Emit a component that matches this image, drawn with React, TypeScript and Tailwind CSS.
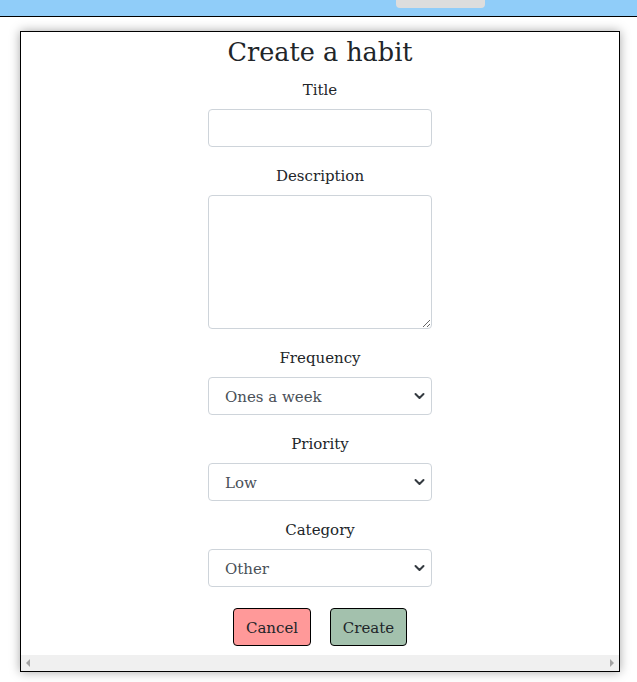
import { useState } from "react";

const serif = { fontFamily: '"DejaVu Serif", "Liberation Serif", serif' };

function Chevron() {
  return (
    <svg
      className="pointer-events-none absolute right-[7px] top-1/2 -translate-y-1/2"
      width="11"
      height="8"
      viewBox="0 0 16 12"
      fill="none"
      stroke="#343a40"
      strokeWidth="3"
      strokeLinecap="round"
      strokeLinejoin="round"
    >
      <path d="m2 3 6 6 6-6" />
    </svg>
  );
}

function Field({ label, children }: { label: string; children: React.ReactNode }) {
  return (
    <div className="flex flex-col items-center mb-4">
      <label className="text-[15px] leading-6 pt-[1px] h-6 text-[#212529] mb-2">{label}</label>
      {children}
    </div>
  );
}

function Select({ value, options, onChange }: { value: string; options: string[]; onChange: (v: string) => void }) {
  return (
    <div className="relative w-[224px]">
      <select
        value={value}
        onChange={(e) => onChange(e.target.value)}
        style={serif}
        className="appearance-none w-full h-[38px] rounded border border-[#ced4da] bg-white pl-4 pr-8 pt-[3px] text-[15px] text-[#495057] outline-none"
      >
        {options.map((o) => (
          <option key={o}>{o}</option>
        ))}
      </select>
      <Chevron />
    </div>
  );
}

export default function App() {
  const [frequency, setFrequency] = useState("Ones a week");
  const [priority, setPriority] = useState("Low");
  const [category, setCategory] = useState("Other");

  return (
    <div className="min-h-[682px] bg-white" style={serif}>
      {/* top bar */}
      <div className="h-[17px] bg-[#90cdf9] border-b border-black flex justify-center">
        <div className="ml-[244px] w-[89px] h-[8px] bg-[#dddddd] rounded-b-[4px]" />
      </div>

      <div className="pt-[14px] pl-[20px]">
        <div className="w-[600px] h-[641px] border border-black bg-white shadow-[0_0_10px_rgba(0,0,0,0.35)] flex flex-col">
          <div className="flex-1 flex flex-col items-center">
            <h2 className="text-[25.5px] leading-[38px] h-[38px] pt-[1px] text-[#212529] mb-[7px]">Create a habit</h2>

            <Field label="Title">
              <input
                type="text"
                className="w-[224px] h-[38px] rounded border border-[#ced4da] bg-white px-3 outline-none"
              />
            </Field>

            <Field label="Description">
              <textarea className="w-[224px] h-[134px] rounded border border-[#ced4da] bg-white px-3 py-1 outline-none block" />
            </Field>

            <Field label="Frequency">
              <Select value={frequency} onChange={setFrequency} options={["Ones a week", "Daily", "Twice a week", "Monthly"]} />
            </Field>

            <Field label="Priority">
              <Select value={priority} onChange={setPriority} options={["Low", "Medium", "High"]} />
            </Field>

            <Field label="Category">
              <Select value={category} onChange={setCategory} options={["Other", "Health", "Work", "Study"]} />
            </Field>

            <div className="flex gap-[19px] mt-[5px]">
              <button className="w-[78px] h-[38px] pt-[3px] rounded border border-black bg-[#ff9999] text-[15px] text-[#212529]">
                Cancel
              </button>
              <button className="w-[77px] h-[38px] pt-[3px] rounded border border-black bg-[#a3c1ad] text-[15px] text-[#212529]">
                Create
              </button>
            </div>
          </div>

          {/* horizontal scrollbar */}
          <div className="h-[16px] bg-[#f0f0f0] flex items-center justify-between px-[5px]">
            <div className="w-0 h-0 border-y-[4px] border-y-transparent border-r-[4px] border-r-[#a3a3a3]" />
            <div className="w-0 h-0 border-y-[4px] border-y-transparent border-l-[4px] border-l-[#a3a3a3]" />
          </div>
        </div>
      </div>
    </div>
  );
}
